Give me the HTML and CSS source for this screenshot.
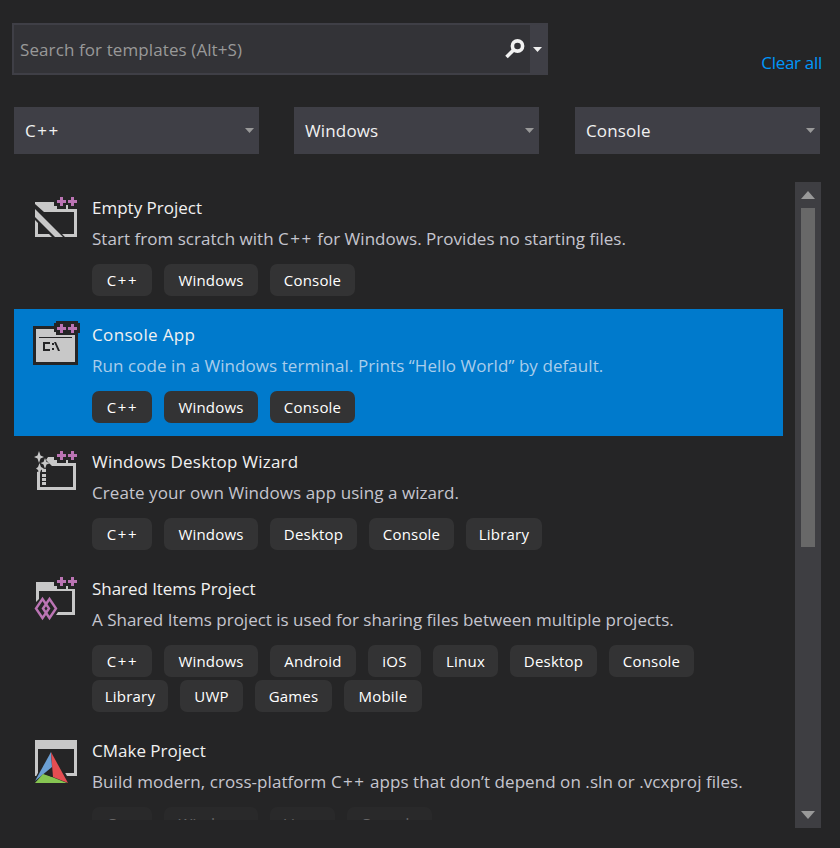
FILE: index.html
```
<!DOCTYPE html>
<html lang="en">
<head>
<meta charset="utf-8">
<title>Create a new project</title>
<link rel="stylesheet" href="styles.css">
</head>
<body>
<main class="page">
  <header class="top">
    <div class="search">
      <div class="field"><span class="placeholder">Search for templates (Alt+S)</span>
        <svg class="lens" width="20" height="20" viewBox="0 0 20 20"><circle cx="12.5" cy="7" r="5.1"/><path d="M8.8 10.8L1.5 18"/></svg>
      </div>
      <div class="more"><svg width="9" height="5" viewBox="0 0 9 5"><path d="M0 0h9L4.500 5z" fill="#f1f1f1"/></svg></div>
    </div>
    <a class="clear">Clear all</a>
  </header>
  <nav class="filters">
    <div class="select"><span class="plus">C++</span><svg width="9" height="5" viewBox="0 0 9 5"><path d="M0 0h9L4.500 5z"/></svg></div>
    <div class="select"><span>Windows</span><svg width="9" height="5" viewBox="0 0 9 5"><path d="M0 0h9L4.500 5z"/></svg></div>
    <div class="select"><span>Console</span><svg width="9" height="5" viewBox="0 0 9 5"><path d="M0 0h9L4.500 5z"/></svg></div>
  </nav>
  <section class="results">
    <div class="list">
      <article class="item">
        <svg class="icon" width="48" height="50" viewBox="0 -2 48 50">
          <path fill="#c8c8c8" d="M3 7h19v4h3v3h20v28H33l-3-3h12V17H12L3 9z"/>
          <path fill="#c8c8c8" d="M3 14L31 42H23L3 22z"/><path fill="#c8c8c8" d="M3 25l3 3v11h11l3 3H3z"/>
          <path fill="#c8c8c8" d="M34 10h2v5h-2z"/>
          <path fill="#bb74b4" d="M28 2h3v3h3v3h-3v3h-3V8h-3V5h3zM39 2h3v3h3v3h-3v3h-3V8h-3V5h3z"/>
        </svg>
        <div class="body">
          <h2 class="title">Empty Project</h2>
          <p class="desc d1">Start from scratch with <span class="plus">C++</span> for Windows. Provides no starting files.</p>
          <div class="tags"><span class="tag cpp">C++</span><span class="tag windows">Windows</span><span class="tag console">Console</span></div>
        </div>
      </article>
      <article class="item selected">
        <svg class="icon" width="48" height="50" viewBox="0 -1 48 50">
          <path fill="#252526" d="M1 5h21V2h2V0h22v2h2v10h-2v32H1z"/>
          <path fill="#c8c8c8" d="M4 8h18v3h2v3h19v27H4z"/>
          <path fill="#252526" d="M7 16h33v1H7zM11 21h7v2h-5v5h5v2h-7zM20 22h2v2h-2zM20 27h2v2h-2zM22 21h2l4 9h-2z"/>
          <path fill="#bb74b4" d="M28 3h3v3h3v3h-3v3h-3V9h-3V6h3zM39 3h3v3h3v3h-3v3h-3V9h-3V6h3z"/>
        </svg>
        <div class="body">
          <h2 class="title t2">Console App</h2>
          <p class="desc d2">Run code in a Windows terminal. Prints “Hello World” by default.</p>
          <div class="tags"><span class="tag cpp">C++</span><span class="tag windows">Windows</span><span class="tag console">Console</span></div>
        </div>
      </article>
      <article class="item">
        <svg class="icon" width="48" height="50" viewBox="0 -2 48 50">
          <path fill="#c8c8c8" fill-rule="evenodd" d="M16 8h6v3h3v3h19v27H5V23l3-1v16h33V17H20l-6-6z"/>
          <path fill="#c8c8c8" d="M34 11h2v4h-2zM10 20h4v3h-4zM10 25h4v3h-4zM10 29h4v3h-4zM10 33h4v3h-4zM7 2l1.500 4.500L12 8 8.500 9.500 7 14 5.500 9.500 2 8l3.500-1.500zM13 9l1.500 4 4 1-4 1.500L13 20l-1.500-4.500-3-1.500 3-1zM7.500 14l1.500 4 3 1.500-3 1.500-1.500 4L6 21l-2-1.500L6 18z"/>
          <path fill="#bb74b4" d="M28 2h3v3h3v3h-3v3h-3V8h-3V5h3zM39 2h3v3h3v3h-3v3h-3V8h-3V5h3z"/>
        </svg>
        <div class="body">
          <h2 class="title t3">Windows Desktop Wizard</h2>
          <p class="desc d3">Create your own Windows app using a wizard.</p>
          <div class="tags"><span class="tag cpp">C++</span><span class="tag windows">Windows</span><span class="tag desktop">Desktop</span><span class="tag console">Console</span><span class="tag library">Library</span></div>
        </div>
      </article>
      <article class="item">
        <svg class="icon" width="48" height="50" viewBox="0 -2 48 50">
          <path fill="#c8c8c8" d="M4 6h18v4h3v3h18v26H24l2-3h14V15H7v8l-3 3z"/>
          <path fill="#c8c8c8" d="M34 10h2v4h-2z"/>
          <g fill="none" stroke="#bb74b4" stroke-width="2.400"><path d="M10.500 23l6.500 9.500-6.500 9.500L4 32.500zM17.500 23l6.500 9.500-6.500 9.500-6.500-9.500z"/></g>
          <path fill="#bb74b4" d="M28 1h3v3h3v3h-3v3h-3V7h-3V4h3zM39 1h3v3h3v3h-3v3h-3V7h-3V4h3z"/>
        </svg>
        <div class="body">
          <h2 class="title t4">Shared Items Project</h2>
          <p class="desc">A Shared Items project is used for sharing files between multiple projects.</p>
          <div class="tags"><span class="tag cpp">C++</span><span class="tag windows">Windows</span><span class="tag android">Android</span><span class="tag ios">iOS</span><span class="tag linux">Linux</span><span class="tag desktop">Desktop</span><span class="tag console">Console</span><span class="tag library">Library</span><span class="tag uwp">UWP</span><span class="tag games">Games</span><span class="tag mobile">Mobile</span></div>
        </div>
      </article>
      <article class="item">
        <svg class="icon" width="48" height="50" viewBox="0 -1 48 50">
          <path fill="#c8c8c8" fill-rule="evenodd" d="M3 3h42v36H3zM6 12v24h36V12z"/>
          <path fill="#252526" d="M19 12L1 45v1h37V39h-3z"/>
          <path fill="#6b9fd4" d="M19 15l1 15L3 44z"/><path fill="#e44d52" d="M19 15l17 31-15-6z"/><path fill="#86c552" d="M11 37l9 3 15 6H3z"/>
          <path fill="#252526" d="M20 31v9l-7-3z"/>
        </svg>
        <div class="body">
          <h2 class="title">CMake Project</h2>
          <p class="desc d5">Build modern, cross-platform <span class="plus">C++</span> apps that don’t depend on .sln or .vcxproj files.</p>
          <div class="tags faded"><span class="tag cpp">C++</span><span class="tag windows">Windows</span><span class="tag linux">Linux</span><span class="tag console">Console</span></div>
        </div>
      </article>
    </div>
    <div class="scrollbar">
      <svg width="14" height="8" viewBox="0 0 14 8"><path d="M0 8h14L7 0z"/></svg>
      <div class="track"><div class="thumb"></div></div>
      <svg width="14" height="8" viewBox="0 0 14 8"><path d="M0 0h14L7 8z"/></svg>
    </div>
  </section>
</main>
</body>
</html>
```
FILE: styles.css
```
* { box-sizing: border-box; }
body {
  margin: 0;
  background: #252526;
  color: #f1f1f1;
  font-family: "Open Sans", "Noto Sans", sans-serif;
  font-size: 17px;
}
.page { width: 840px; height: 848px; padding: 23px 18px 0 12px; overflow: hidden; }
.top { display: flex; justify-content: space-between; height: 52px; }
.search { display: flex; width: 536px; height: 52px; border: 2px solid #3f3f46; }
.field { flex: 1; display: flex; align-items: center; justify-content: space-between; padding: 0 5px 0 6px; background: #333337; color: #999; }
.placeholder { letter-spacing: 0.1px; }
.lens { margin-top: -1px; fill: none; stroke: #f1f1f1; stroke-width: 3.600; }
.more { display: flex; align-items: center; width: 16px; padding-left: 3px; background: #3f3f46; }
.clear { margin-top: 28px; line-height: 24px; color: #0097fb; letter-spacing: -0.3px; }
.filters { display: flex; gap: 35px; margin: 32px 2px 0; }
.select { display: flex; align-items: center; justify-content: space-between; width: 245px; height: 47px; padding: 0 5px 0 11px; background: #3f3f46; line-height: 24px; letter-spacing: 0.15px; }
.select:last-child { margin-left: 1px; }
.plus { letter-spacing: 1.500px; }
.select svg, .scrollbar svg { display: block; fill: #999; }
.results { display: flex; justify-content: space-between; height: 646px; margin: 28px 1px 0 2px; }
.list { width: 769px; height: 638px; overflow: hidden; }
.item { display: flex; padding: 11px 0 13px 18px; }
.selected { background: #007acc; }
.icon { flex: none; margin-right: 12px; }
.title { height: 30px; margin: 0; font-size: 17px; font-weight: 400; line-height: 29px; white-space: nowrap; }
.t2 { letter-spacing: 0.35px; }
.t3 { letter-spacing: 0.22px; }
.t4 { letter-spacing: -0.05px; }
.desc { height: 32px; margin: 0; color: #c5c5cf; line-height: 31px; white-space: nowrap; }
.d1 { letter-spacing: 0.03px; }
.d2, .d3 { letter-spacing: 0.065px; }
.d5 { letter-spacing: 0.06px; }
.selected .desc { color: #a9cdeb; }
.tags { display: flex; flex-wrap: wrap; gap: 3px 12px; width: 640px; margin-top: 9px; }
.tag { width: 85px; height: 32px; border-radius: 7px; background: #333334; color: #fff; font-size: 15px; line-height: 32px; letter-spacing: 0.2px; text-align: center; white-space: nowrap; }
.faded { opacity: 0.3; }
.tag.cpp { width: 60px; padding-left: 1px; letter-spacing: 1.600px; }
.tag.windows { width: 94px; }
.tag.desktop { width: 87px; }
.tag.library { width: 76px; }
.tag.android { width: 86px; }
.tag.ios { width: 53px; }
.tag.linux { width: 65px; }
.tag.uwp { width: 63px; }
.tag.games { width: 77px; }
.tag.mobile { width: 78px; }
.scrollbar { display: flex; flex-direction: column; align-items: center; justify-content: space-between; width: 26px; padding: 9px 0 9px; background: #3e3e42; }
.track { flex: 1; width: 14px; padding-top: 9px; }
.thumb { height: 339px; background: #686868; }
```
